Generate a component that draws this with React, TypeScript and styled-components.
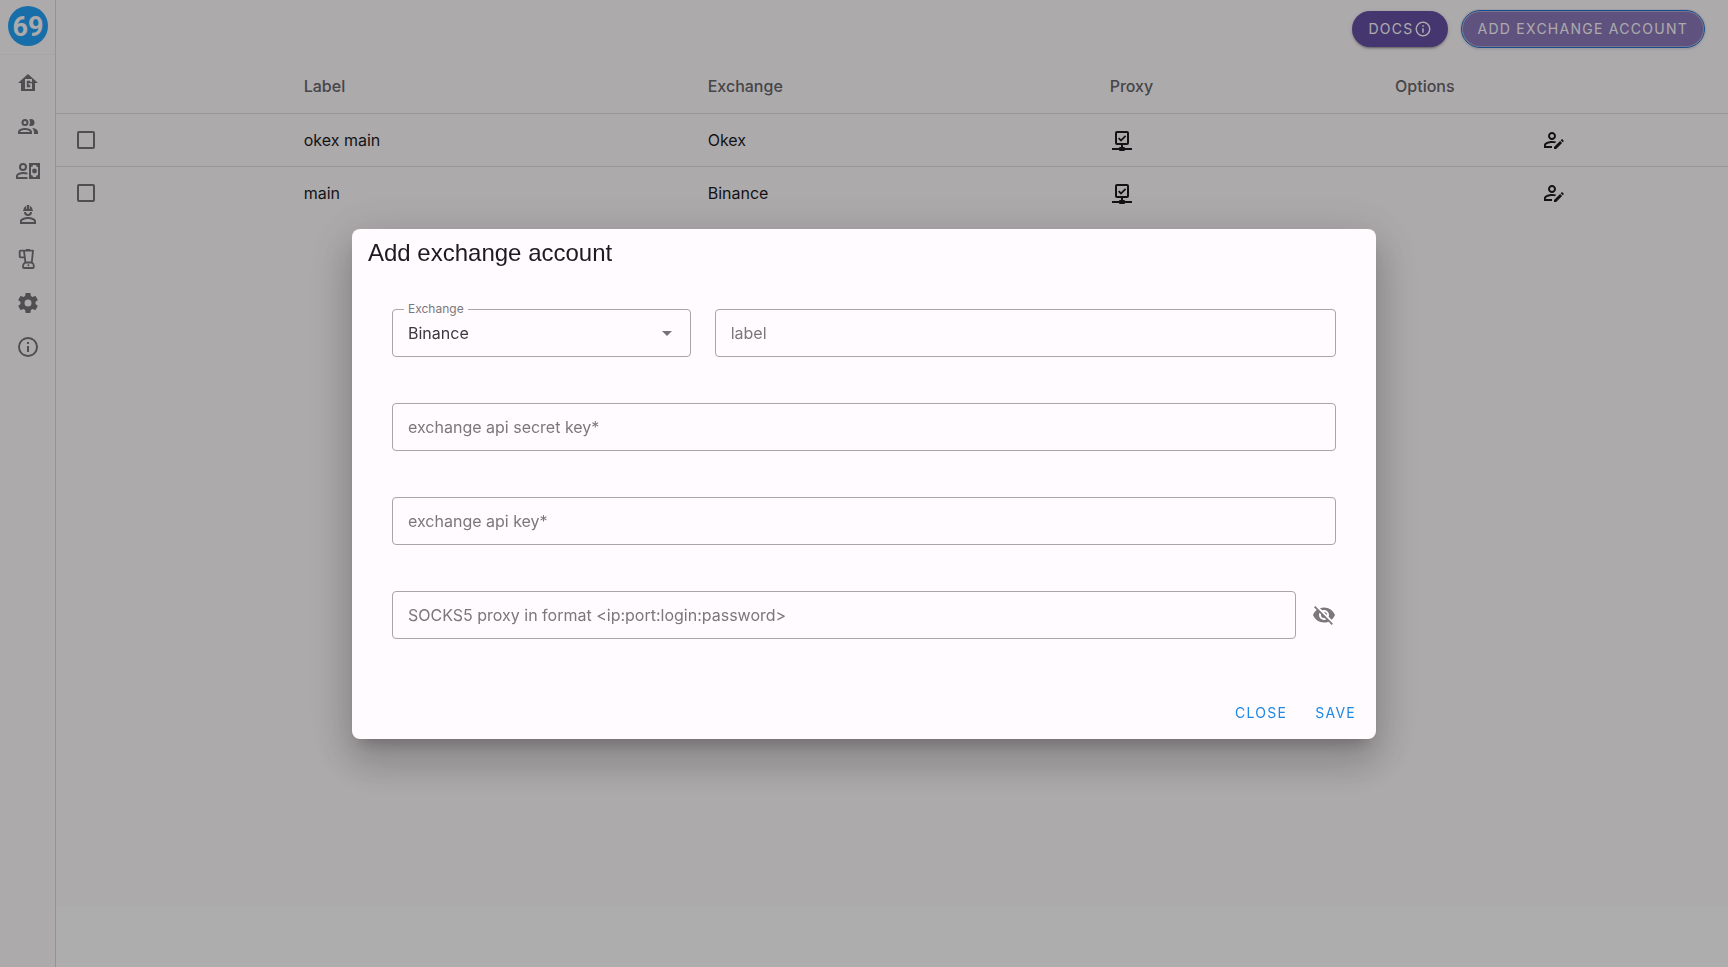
import React from "react";
import styled, { createGlobalStyle } from "styled-components";

const GlobalStyle = createGlobalStyle`
  *, *::before, *::after { box-sizing: border-box; }
  body {
    margin: 0;
    background: #ffffff;
    color: #1c1b1f;
    font-family: Inter, "Liberation Sans", sans-serif;
    font-size: 16px;
    line-height: 24px;
  }
  button, input, select { font: inherit; color: inherit; }
`;

const Page = styled.div`
  display: flex;
  min-height: 100vh;
`;

const Sidebar = styled.nav`
  flex: none;
  width: 56px;
  background: #fffbfe;
  border-right: 1px solid #dcd9dc;
`;

const Brand = styled.a`
  display: flex;
  justify-content: center;
  padding: 6px 0 8px;
  border-bottom: 1px solid #f8f4f7;
`;

const NavList = styled.ul`
  list-style: none;
  margin: 0;
  padding: 6px 0;
`;

const NavLink = styled.a`
  display: flex;
  align-items: center;
  justify-content: center;
  height: 44px;
  color: #757377;
`;

const Content = styled.div`
  flex: 1;
  min-width: 0;
  display: flex;
  flex-direction: column;
`;

const Main = styled.main`
  flex: 1;
  background: #fffbfe;
`;

const Footer = styled.footer`
  height: 61px;
  background: #ffffff;
`;

const Toolbar = styled.header`
  display: flex;
  justify-content: flex-end;
  align-items: center;
  gap: 14px;
  padding: 11px 24px 11px 16px;
`;

const raised = "0 3px 1px -2px rgba(0, 0, 0, 0.2), 0 2px 2px rgba(0, 0, 0, 0.14), 0 1px 5px rgba(0, 0, 0, 0.12)";
const ring = "inset 0 0 0 1px rgba(255, 255, 255, 0.35), 0 0 0 2px #e8e6ec";

const PillButton = styled.button<{ $focused?: boolean }>`
  display: flex;
  align-items: center;
  height: 36px;
  padding: 0 16px;
  border: 0;
  border-radius: 18px;
  background: ${(p) => (p.$focused ? "#8c79bb" : "#6750a4")};
  color: #fffbfe;
  font-size: 14px;
  line-height: 20px;
  font-weight: 400;
  letter-spacing: 0.09em;
  white-space: nowrap;
  box-shadow: ${(p) => (p.$focused ? `${ring}, ${raised}` : raised)};
  outline: ${(p) => (p.$focused ? "1px solid #2573cf" : "none")};
`;

const Table = styled.table`
  width: 100%;
  table-layout: fixed;
  border-collapse: separate;
  border-spacing: 0;
`;

const Col = styled.col<{ $share?: string }>`
  width: ${(p) => p.$share ?? "auto"};
`;

const HeadCell = styled.th`
  height: 56px;
  padding: 0 16px;
  border-bottom: 1px solid #dfdce0;
  color: #68666a;
  font-weight: 500;
  text-align: left;
`;

const Cell = styled.td<{ $last?: boolean }>`
  height: ${(p) => (p.$last ? "52px" : "53px")};
  padding: 0 16px;
  border-bottom: ${(p) => (p.$last ? "0" : "1px solid #dfdce0")};
`;

const Tick = styled.input`
  appearance: none;
  display: block;
  width: 18px;
  height: 18px;
  margin: 0 5px;
  border: 2px solid #757377;
  border-radius: 2px;
`;

const IconButton = styled.button<{ $muted?: boolean }>`
  display: block;
  padding: 0;
  margin: 0 auto;
  border: 0;
  background: none;
  color: ${(p) => (p.$muted ? "#7a787b" : "#1c1b1f")};
`;

const Scrim = styled.div`
  position: fixed;
  inset: 0;
  display: flex;
  align-items: center;
  justify-content: center;
  padding: 24px;
  background: rgba(0, 0, 0, 0.32);
`;

const Dialog = styled.section`
  width: 100%;
  max-width: 1024px;
  border-radius: 8px;
  background: #fffbfe;
  box-shadow: 0 11px 15px -7px rgba(0, 0, 0, 0.2), 0 24px 38px 3px rgba(0, 0, 0, 0.14),
    0 9px 46px 8px rgba(0, 0, 0, 0.12);
`;

const Title = styled.h2`
  margin: 0;
  padding: 8px 16px;
  font-family: "Liberation Sans", Arial, sans-serif;
  font-size: 24px;
  line-height: 32px;
  font-weight: 400;
`;

const Form = styled.form`
  display: grid;
  grid-template-columns: repeat(12, 1fr);
  column-gap: 24px;
  row-gap: 46px;
  padding: 32px 40px 48px;
`;

const Field = styled.div<{ $span: number }>`
  grid-column: span ${(p) => p.$span};
  position: relative;
  display: flex;
  align-items: center;
  gap: 16px;
`;

const TextBox = styled.input`
  flex: 1;
  min-width: 0;
  height: 48px;
  padding: 0 15px;
  border: 1px solid #a8a6a9;
  border-radius: 4px;
  background: transparent;
  &::placeholder { color: #7a787b; opacity: 1; }
`;

const Select = styled.select`
  appearance: none;
  width: 100%;
  height: 48px;
  padding: 0 48px 0 15px;
  border: 1px solid #a8a6a9;
  border-radius: 4px;
  background: transparent;
  color: #3b393d;
`;

const FloatingLabel = styled.label`
  position: absolute;
  top: -8px;
  left: 12px;
  padding: 0 4px;
  background: #fffbfe;
  color: #7a787b;
  font-size: 12px;
  line-height: 16px;
`;

const Caret = styled.span`
  position: absolute;
  top: 12px;
  right: 12px;
  height: 24px;
  color: #757377;
  pointer-events: none;
`;

const Actions = styled.div`
  display: flex;
  justify-content: flex-end;
  gap: 4px;
  padding: 8px;
`;

const TextButton = styled.button`
  height: 36px;
  padding: 0 12px;
  border: 0;
  background: none;
  color: #1e88e5;
  font-size: 14px;
  line-height: 20px;
  font-weight: 400;
  letter-spacing: 0.09em;
`;

const Glyph = styled.svg`
  display: block;
  flex: none;
  fill: currentColor;
`;

function Icon({ d, size = 24, children }: { d?: string; size?: number; children?: React.ReactNode }) {
  return (
    <Glyph viewBox="0 0 24 24" width={size} height={size} aria-hidden="true">
      {d && <path fillRule="evenodd" d={d} />}
      {children}
    </Glyph>
  );
}

const paths = {
  people:
    "M13.07 10.41A5 5 0 0 0 13.07 4.59A3.39 3.39 0 0 1 15 4A3.5 3.5 0 0 1 15 11A3.39 3.39 0 0 1 13.07 10.41M5.5 7.5A3.5 3.5 0 1 1 9 11A3.5 3.5 0 0 1 5.5 7.5M7.5 7.5A1.5 1.5 0 1 0 9 6A1.5 1.5 0 0 0 7.5 7.5M16 17V19H2V17S2 13 9 13 16 17 16 17M14 17C13.86 16.22 12.67 15 9 15S4.07 16.31 4 17M15.95 13A5.32 5.32 0 0 1 18 17V19H22V17S22 13.37 15.94 13Z",
  cog: "M12,15.5A3.5,3.5 0 0,1 8.5,12A3.5,3.5 0 0,1 12,8.5A3.5,3.5 0 0,1 15.5,12A3.5,3.5 0 0,1 12,15.5M19.43,12.97C19.47,12.65 19.5,12.33 19.5,12C19.5,11.67 19.47,11.34 19.43,11L21.54,9.37C21.73,9.22 21.78,8.95 21.66,8.73L19.66,5.27C19.54,5.05 19.27,4.96 19.05,5.05L16.56,6.05C16.04,5.66 15.5,5.32 14.87,5.07L14.5,2.42C14.46,2.18 14.25,2 14,2H10C9.75,2 9.54,2.18 9.5,2.42L9.13,5.07C8.5,5.32 7.96,5.66 7.44,6.05L4.95,5.05C4.73,4.96 4.46,5.05 4.34,5.27L2.34,8.73C2.21,8.95 2.27,9.22 2.46,9.37L4.57,11C4.53,11.34 4.5,11.67 4.5,12C4.5,12.33 4.53,12.65 4.57,12.97L2.46,14.63C2.27,14.78 2.21,15.05 2.34,15.27L4.34,18.73C4.46,18.95 4.73,19.03 4.95,18.95L7.44,17.94C7.96,18.34 8.5,18.68 9.13,18.93L9.5,21.58C9.54,21.82 9.75,22 10,22H14C14.25,22 14.46,21.82 14.5,21.58L14.87,18.93C15.5,18.67 16.04,18.34 16.56,17.94L19.05,18.95C19.27,19.03 19.54,18.95 19.66,18.73L21.66,15.27C21.78,15.05 21.73,14.78 21.54,14.63L19.43,12.97Z",
  info: "M11,9H13V7H11M12,20C7.59,20 4,16.41 4,12C4,7.59 7.59,4 12,4C16.41,4 20,7.59 20,12C20,16.41 16.41,20 12,20M12,2A10,10 0 0,0 2,12A10,10 0 0,0 12,22A10,10 0 0,0 22,12A10,10 0 0,0 12,2M11,17H13V11H11V17Z",
  network:
    "M15 20A1 1 0 0 0 14 19H13V17H17A2 2 0 0 0 19 15V5A2 2 0 0 0 17 3H7A2 2 0 0 0 5 5V15A2 2 0 0 0 7 17H11V19H10A1 1 0 0 0 9 20H2V22H9A1 1 0 0 0 10 23H14A1 1 0 0 0 15 22H22V20H15M7 15V5H17V15H7M11 13.8L8 10.8L9.3 9.5L11 11.2L15 7.2L16.2 8.5L11 13.8Z",
  edit: "M2 17V20H10V18.11H3.9V17C3.9 16.36 7.03 14.9 10 14.9C10.96 14.91 11.91 15.04 12.83 15.28L14.35 13.76C12.95 13.29 11.5 13.03 10 13C7.33 13 2 14.33 2 17M10 4C7.79 4 6 5.79 6 8S7.79 12 10 12 14 10.21 14 8 12.21 4 10 4M10 10C8.9 10 8 9.11 8 8S8.9 6 10 6 12 6.9 12 8 11.11 10 10 10M21.7 13.35L20.7 14.35L18.65 12.35L19.65 11.35C19.86 11.14 20.21 11.14 20.42 11.35L21.7 12.63C21.91 12.84 21.91 13.19 21.7 13.4M12 18.94L18.06 12.88L20.11 14.88L14.11 20.95H12V18.94",
  eyeOff:
    "M11.83,9L15,12.16C15,12.11 15,12.05 15,12A3,3 0 0,0 12,9C11.94,9 11.89,9 11.83,9M7.53,9.8L9.08,11.35C9.03,11.56 9,11.77 9,12A3,3 0 0,0 12,15C12.22,15 12.44,14.97 12.65,14.92L14.2,16.47C13.53,16.8 12.79,17 12,17A5,5 0 0,1 7,12C7,11.21 7.2,10.47 7.53,9.8M2,4.27L4.28,6.55L4.73,7C3.08,8.3 1.78,10 1,12C2.73,16.39 7,19.5 12,19.5C13.55,19.5 15.03,19.2 16.38,18.66L16.81,19.08L19.73,22L21,20.73L3.27,3M12,7A5,5 0 0,1 17,12C17,12.64 16.87,13.26 16.64,13.82L19.57,16.75C21.07,15.5 22.27,13.86 23,12C21.27,7.61 17,4.5 12,4.5C10.6,4.5 9.26,4.75 8,5.2L10.17,7.35C10.74,7.13 11.35,7 12,7Z",
  caret: "M7,10L12,15L17,10H7Z",
};

const HomeIcon = () => (
  <Icon d="M12 3L2 12H5V20H19V12H22L12 3M9 8H16V11H14.200V9.800H10.800V16.200H14.200V13.800H12.500V12.200H16V18H9V8Z" />
);

const CashierIcon = () => (
  <Icon>
    <g fill="none" stroke="currentColor" strokeWidth="2">
      <circle cx="7" cy="8" r="3" />
      <path d="M11.5 14.6C10.3 14.2 8.6 14 7 14C4 14 1 15.4 1 17V19H11.5" />
    </g>
    <path
      fillRule="evenodd"
      d="M13 4H24V20H13V4M15 8V16A2 2 0 0 1 17 18H20A2 2 0 0 1 22 16V8A2 2 0 0 1 20 6H17A2 2 0 0 1 15 8Z"
    />
    <circle cx="18.5" cy="12" r="2.4" />
  </Icon>
);

const WorkerIcon = () => (
  <Icon d="M12 14C9.3 14 4 15.3 4 18V21H20V18C20 15.3 14.7 14 12 14M18 19H6V18C6.2 17.3 9 15.9 12 15.9S17.8 17.3 18 18V19M8 9A4 4 0 0 0 16 9H14A2 2 0 0 1 10 9H8M17 7V8H7V7H7.5C7.5 5.2 8.5 3.7 10 3V6H10.7V2.5C10.7 2.2 10.9 2 11.2 2H12.8C13.1 2 13.3 2.2 13.3 2.5V6H14V3C15.5 3.7 16.5 5.2 16.5 7H17Z" />
);

const BlenderIcon = () => (
  <Icon>
    <g fill="none" stroke="currentColor" strokeWidth="1.8" strokeLinejoin="round">
      <path d="M8.600 3.600H17L15.8 15.5H9.4L8 3.600H4.5C4 3.600 3.700 3.900 3.700 4.5V9.5C3.700 10 4 10.3 4.5 10.3H8.4" />
      <path d="M9.4 15.5C7.8 16.3 7 17.5 7 19V20C7 20.7 7.3 21 8 21H16.8C17.5 21 17.8 20.7 17.8 20V19C17.8 17.5 17.2 16.3 15.8 15.5" />
    </g>
    <rect x="10" y="2" width="4" height="2" />
    <circle cx="12.4" cy="18.2" r="1" />
  </Icon>
);

const Logo = () => (
  <svg viewBox="0 0 40 40" width="40" height="40" role="img" aria-label="69">
    <circle cx="20" cy="20" r="20" fill="#24a3f8" />
    <text
      x="20"
      y="30"
      textAnchor="middle"
      fill="#fffbfe"
      fontFamily="Roboto, sans-serif"
      fontSize="27"
      fontWeight="700"
    >
      69
    </text>
  </svg>
);

const navItems = [
  { name: "Home", icon: <HomeIcon /> },
  { name: "Accounts", icon: <Icon d={paths.people} /> },
  { name: "Exchange accounts", icon: <CashierIcon /> },
  { name: "Workers", icon: <WorkerIcon /> },
  { name: "Mixer", icon: <BlenderIcon /> },
  { name: "Settings", icon: <Icon d={paths.cog} /> },
  { name: "About", icon: <Icon d={paths.info} /> },
];

const accounts = [
  { label: "okex main", exchange: "Okex" },
  { label: "main", exchange: "Binance" },
];

export default function App() {
  return (
    <>
      <GlobalStyle />
      <Page>
        <Sidebar aria-label="Main">
          <Brand href="#">
            <Logo />
          </Brand>
          <NavList>
            {navItems.map((item) => (
              <li key={item.name}>
                <NavLink href="#" aria-label={item.name}>
                  {item.icon}
                </NavLink>
              </li>
            ))}
          </NavList>
        </Sidebar>
        <Content>
          <Main>
            <Toolbar>
              <PillButton type="button">
                DOCS
                <Icon d={paths.info} size={18} />
              </PillButton>
              <PillButton type="button" $focused>
                ADD EXCHANGE ACCOUNT
              </PillButton>
            </Toolbar>
            <Table>
              <colgroup>
                <Col $share="13.86%" />
                <Col $share="24.16%" />
                <Col $share="24.04%" />
                <Col $share="17.07%" />
                <Col />
              </colgroup>
              <thead>
                <tr>
                  <HeadCell aria-label="Select" />
                  <HeadCell>Label</HeadCell>
                  <HeadCell>Exchange</HeadCell>
                  <HeadCell>Proxy</HeadCell>
                  <HeadCell>Options</HeadCell>
                </tr>
              </thead>
              <tbody>
                {accounts.map((account, i) => {
                  const last = i === accounts.length - 1;
                  return (
                    <tr key={account.label}>
                      <Cell $last={last}>
                        <Tick type="checkbox" aria-label={`Select ${account.label}`} />
                      </Cell>
                      <Cell $last={last}>{account.label}</Cell>
                      <Cell $last={last}>{account.exchange}</Cell>
                      <Cell $last={last}>
                        <Icon d={paths.network} />
                      </Cell>
                      <Cell $last={last}>
                        <IconButton type="button" aria-label={`Edit ${account.label}`}>
                          <Icon d={paths.edit} />
                        </IconButton>
                      </Cell>
                    </tr>
                  );
                })}
              </tbody>
            </Table>
          </Main>
          <Footer />
        </Content>
      </Page>
      <Scrim>
        <Dialog role="dialog" aria-modal="true" aria-labelledby="dialog-title">
          <Title id="dialog-title">Add exchange account</Title>
          <Form id="account-form">
            <Field $span={4}>
              <Select id="exchange" defaultValue="Binance">
                <option>Binance</option>
                <option>Okex</option>
              </Select>
              <FloatingLabel htmlFor="exchange">Exchange</FloatingLabel>
              <Caret>
                <Icon d={paths.caret} />
              </Caret>
            </Field>
            <Field $span={8}>
              <TextBox aria-label="label" placeholder="label" />
            </Field>
            <Field $span={12}>
              <TextBox aria-label="exchange api secret key" placeholder="exchange api secret key*" required />
            </Field>
            <Field $span={12}>
              <TextBox aria-label="exchange api key" placeholder="exchange api key*" required />
            </Field>
            <Field $span={12}>
              <TextBox aria-label="SOCKS5 proxy" placeholder="SOCKS5 proxy in format <ip:port:login:password>" />
              <IconButton type="button" $muted aria-label="Show proxy">
                <Icon d={paths.eyeOff} />
              </IconButton>
            </Field>
          </Form>
          <Actions>
            <TextButton type="button">CLOSE</TextButton>
            <TextButton type="submit" form="account-form">
              SAVE
            </TextButton>
          </Actions>
        </Dialog>
      </Scrim>
    </>
  );
}
